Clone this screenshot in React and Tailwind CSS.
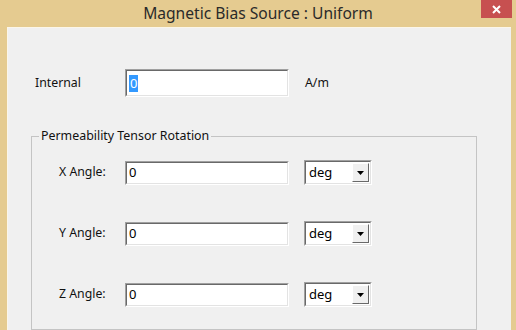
import React from "react";

function Sunken({ className = "", children }) {
  return (
    <div className={"border-t border-l border-t-[#a0a0a0] border-l-[#a0a0a0] border-b border-r border-b-[#ffffff] border-r-[#ffffff] " + className}>
      <div className="h-full w-full border-t border-l border-t-[#696969] border-l-[#696969] border-b border-r border-b-[#e3e3e3] border-r-[#e3e3e3] bg-white flex items-center">
        {children}
      </div>
    </div>
  );
}

function Combo() {
  return (
    <Sunken className="w-[68px] h-[25px]">
      <span className="flex-1 pl-[3px] text-[13px] leading-none text-black">deg</span>
      <div className="w-[17px] h-[19px] mr-[1px] bg-[#f0f0f0] border border-t-white border-l-white border-b-[#696969] border-r-[#696969] flex items-center justify-center">
        <svg width="7" height="4" viewBox="0 0 7 4"><path d="M0 0h7L3.5 4z" fill="#000" /></svg>
      </div>
    </Sunken>
  );
}

function AngleRow({ label }) {
  return (
    <div className="flex items-center">
      <span className="w-[66px] text-[12.3px] text-[#111111]">{label}</span>
      <Sunken className="w-[164px] h-[24px]">
        <span className="pl-[2px] text-[13px] leading-none text-black">0</span>
      </Sunken>
      <div className="w-[15px]" />
      <Combo />
    </div>
  );
}

export default function App() {
  return (
    <div className="w-[516px] h-[330px] bg-[#e5cb90] flex flex-col overflow-hidden relative" style={{ fontFamily: '"Noto Sans", "Open Sans", sans-serif' }}>
      <div className="h-[27px] flex items-center justify-center text-[15.6px] text-[#2a2a2a] shrink-0">
        Magnetic Bias Source : Uniform
      </div>
      <div className="absolute top-0 left-[481px] w-[31px] h-[18px] bg-[#c75050] flex items-center justify-center">
        <svg width="9" height="9" viewBox="0 0 9 9"><path d="M1 1L8 8M8 1L1 8" stroke="#fff" strokeWidth="2" /></svg>
      </div>
      <div className="flex-1 ml-[7px] mr-[5px] bg-[#f0f0f0] border-t border-l border-[#fbf6ea] flex flex-col">
        <div className="flex items-center mt-[41px] pl-[27px]">
          <span className="w-[90px] text-[12.3px] text-[#111111]">Internal</span>
          <Sunken className="w-[164px] h-[28px]">
            <span className="ml-[2px] px-[1px] bg-[#3399ff] text-white text-[13px] leading-[17px]">0</span>
          </Sunken>
          <span className="ml-[16px] text-[12.3px] text-[#111111]">A/m</span>
        </div>
        <fieldset className="ml-[23px] mt-[31px] w-[446px] border border-[#c4c4c4] flex-1">
          <legend className="ml-[7px] px-[2px] text-[12.4px] leading-[16px] text-[#111111]">Permeability Tensor Rotation</legend>
          <div className="flex flex-col gap-[36px] pl-[27px] pt-[16px]">
            <AngleRow label="X Angle:" />
            <AngleRow label="Y Angle:" />
            <AngleRow label="Z Angle:" />
          </div>
        </fieldset>
      </div>
    </div>
  );
}
